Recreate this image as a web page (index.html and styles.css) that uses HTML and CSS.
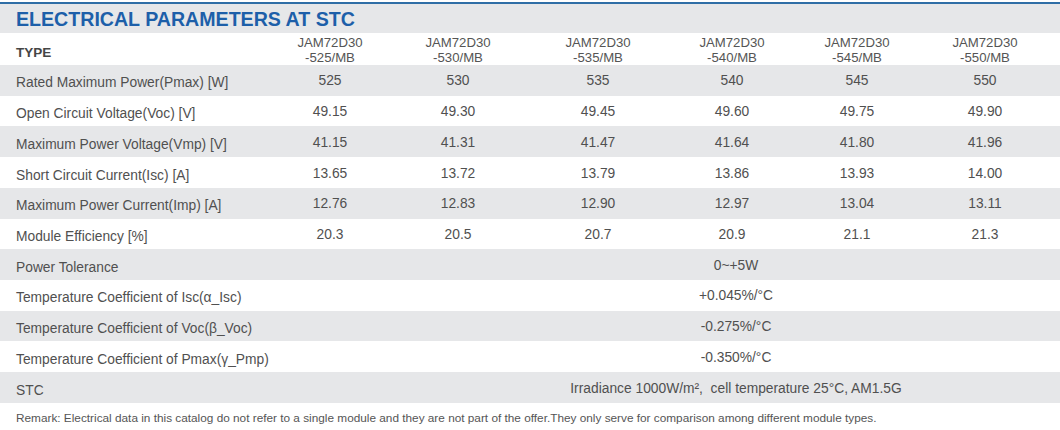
FILE: index.html
```html
<!DOCTYPE html>
<html>
<head>
<meta charset="utf-8">
<link rel="stylesheet" href="styles.css">
</head>
<body>
<div class="sheet">
  <h1 class="title">ELECTRICAL PARAMETERS AT STC</h1>
  <table class="params">
    <colgroup>
      <col class="c-label"><col class="c1"><col class="c2"><col class="c3"><col class="c4"><col class="c5"><col class="c6">
    </colgroup>
    <thead>
      <tr class="head">
        <th class="lbl">TYPE</th>
        <th>JAM72D30<br>-525/MB</th>
        <th>JAM72D30<br>-530/MB</th>
        <th>JAM72D30<br>-535/MB</th>
        <th>JAM72D30<br>-540/MB</th>
        <th>JAM72D30<br>-545/MB</th>
        <th>JAM72D30<br>-550/MB</th>
      </tr>
    </thead>
    <tbody>
      <tr class="g"><td class="lbl">Rated Maximum Power(Pmax) [W]</td><td>525</td><td>530</td><td>535</td><td>540</td><td>545</td><td>550</td></tr>
      <tr><td class="lbl">Open Circuit Voltage(Voc) [V]</td><td>49.15</td><td>49.30</td><td>49.45</td><td>49.60</td><td>49.75</td><td>49.90</td></tr>
      <tr class="g"><td class="lbl">Maximum Power Voltage(Vmp) [V]</td><td>41.15</td><td>41.31</td><td>41.47</td><td>41.64</td><td>41.80</td><td>41.96</td></tr>
      <tr><td class="lbl">Short Circuit Current(Isc) [A]</td><td>13.65</td><td>13.72</td><td>13.79</td><td>13.86</td><td>13.93</td><td>14.00</td></tr>
      <tr class="g"><td class="lbl">Maximum Power Current(Imp) [A]</td><td>12.76</td><td>12.83</td><td>12.90</td><td>12.97</td><td>13.04</td><td>13.11</td></tr>
      <tr><td class="lbl">Module Efficiency [%]</td><td>20.3</td><td>20.5</td><td>20.7</td><td>20.9</td><td>21.1</td><td>21.3</td></tr>
      <tr class="g"><td class="lbl">Power Tolerance</td><td class="span" colspan="6">0~+5W</td></tr>
      <tr><td class="lbl">Temperature Coefficient of Isc(α_Isc)</td><td class="span" colspan="6">+0.045%/°C</td></tr>
      <tr class="g"><td class="lbl">Temperature Coefficient of Voc(β_Voc)</td><td class="span" colspan="6">-0.275%/°C</td></tr>
      <tr><td class="lbl">Temperature Coefficient of Pmax(γ_Pmp)</td><td class="span" colspan="6">-0.350%/°C</td></tr>
      <tr class="g"><td class="lbl">STC</td><td class="span" colspan="6">Irradiance 1000W/m²,&nbsp; cell temperature 25°C, AM1.5G</td></tr>
    </tbody>
  </table>
  <p class="remark">Remark: Electrical data in this catalog do not refer to a single module and they are not part of the offer.They only serve for comparison among different module types.</p>
</div>
</body>
</html>
```

FILE: styles.css
```css
html, body {
  margin: 0;
  padding: 0;
  background: #ffffff;
}

.sheet {
  width: 1060px;
  padding-top: 2px;
  font-family: "Liberation Sans", Arial, sans-serif;
  color: #4a4a4a;
}

.title {
  margin: 0;
  height: 29px;
  border-top: 2px solid #2f6ea6;
  background: #e6e7e9;
  color: #1d5fa9;
  font-size: 19.6px;
  font-weight: bold;
  line-height: 31px;
  padding-left: 16px;
}

.params {
  width: 1060px;
  border-collapse: collapse;
  table-layout: fixed;
  font-size: 13.8px;
}

.c-label { width: 266px; }
.c1 { width: 128px; }
.c2 { width: 128px; }
.c3 { width: 152px; }
.c4 { width: 116px; }
.c5 { width: 134px; }
.c6 { width: 136px; }

.params th,
.params td {
  padding: 0;
  text-align: center;
  vertical-align: middle;
  font-weight: normal;
  color: #505050;
  white-space: nowrap;
}

.params td:last-child:not(.span),
.params th:last-child {
  padding-right: 14px;
}

.head {
  height: 32px;
}

.head th {
  font-size: 13.2px;
  line-height: 15px;
  padding-top: 2px;
  color: #555555;
}

.head th.lbl {
  font-size: 13.5px;
  font-weight: bold;
  color: #454545;
  padding-top: 6px;
}

.params .lbl {
  text-align: left;
  padding-left: 16px;
  overflow: visible;
}

.params tbody tr {
  height: 30.73px;
}

.params tbody td {
  padding-top: 1px;
}

.params tbody td.lbl {
  padding-top: 5px;
}

.params tr.g {
  background: #e6e7e9;
}

.params td.span {
  padding-left: 146px;
}

.remark {
  margin: 0;
  padding: 8px 0 0 16px;
  font-size: 11.8px;
  color: #555555;
}
```
